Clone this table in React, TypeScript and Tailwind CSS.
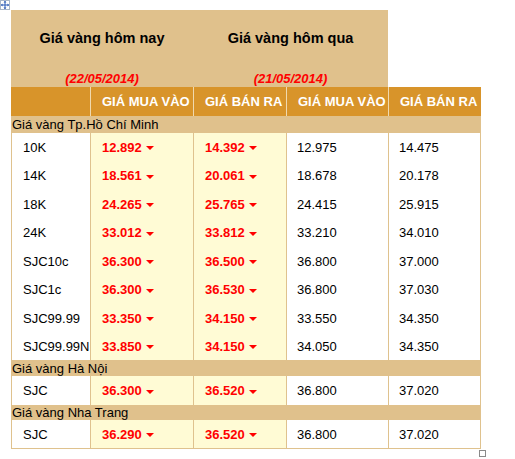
import React from "react";

type Row = { name: string; buyToday: string; sellToday: string; buyYest: string; sellYest: string };
type Group = { title: string; rows: Row[]; titleH: string; rowH: string[] };

const groups: Group[] = [
  {
    title: "Giá vàng Tp.Hồ Chí Minh",
    titleH: "h-[17px]",
    rowH: ["h-[28px]", "h-[29px]", "h-[28px]", "h-[29px]", "h-[28px]", "h-[29px]", "h-[28px]", "h-[28px]"],
    rows: [
      { name: "10K", buyToday: "12.892", sellToday: "14.392", buyYest: "12.975", sellYest: "14.475" },
      { name: "14K", buyToday: "18.561", sellToday: "20.061", buyYest: "18.678", sellYest: "20.178" },
      { name: "18K", buyToday: "24.265", sellToday: "25.765", buyYest: "24.415", sellYest: "25.915" },
      { name: "24K", buyToday: "33.012", sellToday: "33.812", buyYest: "33.210", sellYest: "34.010" },
      { name: "SJC10c", buyToday: "36.300", sellToday: "36.500", buyYest: "36.800", sellYest: "37.000" },
      { name: "SJC1c", buyToday: "36.300", sellToday: "36.530", buyYest: "36.800", sellYest: "37.030" },
      { name: "SJC99.99", buyToday: "33.350", sellToday: "34.150", buyYest: "33.550", sellYest: "34.350" },
      { name: "SJC99.99N", buyToday: "33.850", sellToday: "34.150", buyYest: "34.050", sellYest: "34.350" },
    ],
  },
  {
    title: "Giá vàng Hà Nội",
    titleH: "h-[16px]",
    rowH: ["h-[29px]"],
    rows: [{ name: "SJC", buyToday: "36.300", sellToday: "36.520", buyYest: "36.800", sellYest: "37.020" }],
  },
  {
    title: "Giá vàng Nha Trang",
    titleH: "h-[15px]",
    rowH: ["h-[28px]"],
    rows: [{ name: "SJC", buyToday: "36.290", sellToday: "36.520", buyYest: "36.800", sellYest: "37.020" }],
  },
];

const cols = "grid grid-cols-[79px_103px_93px_102px_93px]";

function Down() {
  return (
    <svg width="8" height="4" viewBox="0 0 8 4" className="ml-[4px] mt-[2px]">
      <polygon points="0,0 8,0 4,4" fill="#ff0000" />
    </svg>
  );
}

function Price({ v }: { v: string }) {
  return (
    <div className="flex items-center pl-[11px] font-bold text-[#ff0000]">
      <span>{v}</span>
      <Down />
    </div>
  );
}

export default function App() {
  return (
    <div
      className="relative w-[515px] h-[459px] bg-white text-[13px] text-black"
      style={{ fontFamily: '"Liberation Sans", Arial, sans-serif' }}
    >
      {/* table move handle */}
      <div className="absolute left-0 top-0 w-[10px] h-[10px] border border-[#a9b6c8] bg-white flex items-center justify-center">
        <svg width="8" height="8" viewBox="0 0 8 8">
          <path d="M4 0 L4 8 M0 4 L8 4" stroke="#2b5bb5" strokeWidth="1" />
          <path d="M4 0 L2.5 1.5 L5.5 1.5 Z M4 8 L2.5 6.5 L5.5 6.5 Z M0 4 L1.5 2.5 L1.5 5.5 Z M8 4 L6.5 2.5 L6.5 5.5 Z" fill="#2b5bb5" />
        </svg>
      </div>

      <div className="pl-[11px] pt-[10px] leading-none">
        {/* top block */}
        <div className="flex w-[377px] h-[77px] bg-[#e0c18c]">
          {[
            { t: "Giá vàng hôm nay", d: "(22/05/2014)", w: "w-[182px]" },
            { t: "Giá vàng hôm qua", d: "(21/05/2014)", w: "w-[195px]" },
          ].map((c) => (
            <div key={c.t} className={`${c.w} flex flex-col items-center pt-[20px]`}>
              <div className="text-[14.5px] font-bold leading-[17px]">{c.t}</div>
              <div className="mt-[24px] font-bold italic text-[#ff0000] leading-[15px]">{c.d}</div>
            </div>
          ))}
        </div>

        {/* header */}
        <div className={`${cols} w-[470px] h-[29px] bg-[#d8942a] text-white font-bold`}>
          {["", "GIÁ MUA VÀO", "GIÁ BÁN RA", "GIÁ MUA VÀO", "GIÁ BÁN RA"].map((h, i) => (
            <div
              key={i}
              className={`flex items-center pl-[11px] ${i > 0 ? "border-l border-[#f0d9ae]" : ""}`}
            >
              {h}
            </div>
          ))}
        </div>

        {groups.map((g) => (
          <div key={g.title}>
            <div className={`${g.titleH} w-[470px] bg-[#e0c18c] flex items-center pl-[1px]`}>{g.title}</div>
            {g.rows.map((r, i) => (
              <div key={r.name + i} className={`${cols} w-[470px] ${g.rowH[i]}`}>
                <div className="flex items-center pl-[11px] bg-white border-l border-[#dfc28e]">{r.name}</div>
                <div className="flex bg-[#fffbd5] border-l border-[#dfc28e]">
                  <Price v={r.buyToday} />
                </div>
                <div className="flex bg-[#fffbd5] border-l border-[#dfc28e]">
                  <Price v={r.sellToday} />
                </div>
                <div className="flex items-center pl-[10px] bg-white border-l border-[#dfc28e]">{r.buyYest}</div>
                <div className="flex items-center pl-[10px] bg-white border-l border-r border-[#dfc28e]">{r.sellYest}</div>
              </div>
            ))}
          </div>
        ))}
        <div className="w-[470px] h-px bg-[#dfc28e]" />
      </div>

      {/* table resize handle */}
      <div className="absolute left-[479px] top-[450px] w-[7px] h-[7px] border border-[#8a8a8a] bg-white" />
    </div>
  );
}
